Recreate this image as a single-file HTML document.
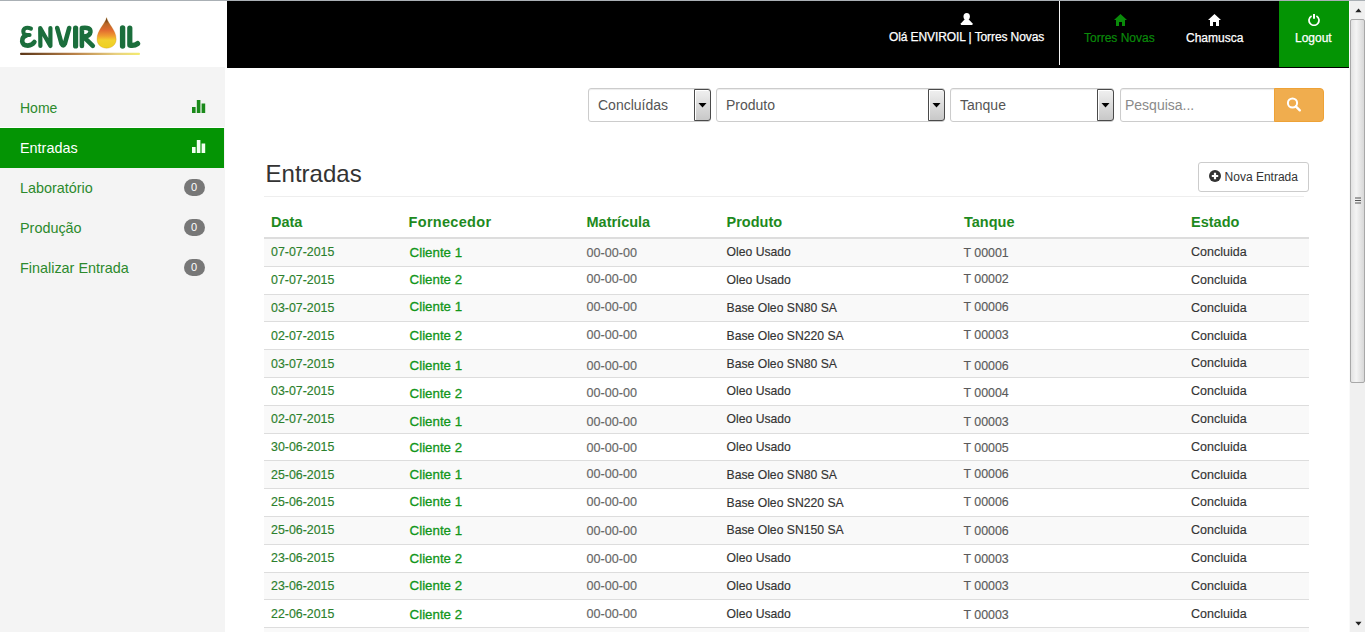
<!DOCTYPE html>
<html><head><meta charset="utf-8"><title>Entradas</title>
<style>
html,body{margin:0;padding:0;width:1365px;height:632px;overflow:hidden;background:#fff;font-family:"Liberation Sans",sans-serif;}
.r{position:absolute;}
.t{position:absolute;line-height:1;white-space:nowrap;}
.tb .t,.s{-webkit-text-stroke:0.15px currentColor;}
</style></head><body>
<div class="r" style="left:0px;top:0px;width:1365px;height:1px;background:#aab0b5"></div>
<div class="r" style="left:0px;top:1px;width:225px;height:66px;background:#fff"></div>
<div class="r" style="left:0px;top:67px;width:225px;height:565px;background:#f4f4f4"></div>
<svg class="r" style="left:0px;top:0px" width="225" height="67" viewBox="0 0 225 67">
<defs>
<linearGradient id="ul" x1="0" x2="1" y1="0" y2="0"><stop offset="0" stop-color="#5a3618"/><stop offset="0.45" stop-color="#b88048"/><stop offset="0.8" stop-color="#e8d080"/><stop offset="1" stop-color="#f4ec70"/></linearGradient>
<linearGradient id="drop" x1="0" x2="0" y1="0" y2="1"><stop offset="0" stop-color="#40240c"/><stop offset="0.2" stop-color="#b86828"/><stop offset="0.42" stop-color="#e26c30"/><stop offset="0.6" stop-color="#f09c30"/><stop offset="0.74" stop-color="#f2d22e"/><stop offset="1" stop-color="#eed020"/></linearGradient>
</defs>
<g fill="none" stroke="#1b6e3c" stroke-linecap="round" stroke-linejoin="round">
<path d="M31 28.6 Q27.2 26.8 24.8 28.4 Q22.6 30.2 23.6 33 Q24.4 35 27.4 35 L29.6 35" stroke-width="4"/>
<path d="M26.4 35.6 Q22 36.6 22.2 41.4 Q22.8 45.6 27.8 45.6 Q32.2 45.4 34.4 42" stroke-width="4.6"/>
<path d="M40.4 46 L40.2 28 L50.4 46 L50.4 28" stroke-width="4.2"/>
<path d="M57.2 28 L61.6 43.8 Q63.2 47 64.8 43.8 L69.2 28" stroke-width="4.6"/>
<path d="M75.6 28 L75.6 46" stroke-width="5.2"/>
<path d="M81.9 46 L81.9 28 Q90.8 26.8 90.4 32 Q89.9 36.4 83.5 36.6 L92.8 45.8" stroke-width="4.6"/>
<path d="M122.6 28 L122.6 46" stroke-width="5.4"/>
<path d="M129.8 28 L129.8 45.2 Q134.5 46 137.6 43.6" stroke-width="5.2"/>
</g>
<path d="M106.6 17.6 C108 24 116.2 30 116.2 39.2 C116.2 44.6 111.8 48.2 106.6 48.2 C101.4 48.2 97 44.6 97 39.2 C97 30 105.2 24 106.6 17.6 Z" fill="url(#drop)" stroke="#c8801c" stroke-opacity="0.5" stroke-width="0.5"/>
<rect x="20" y="52.8" width="120" height="2.3" rx="1" fill="url(#ul)"/>
</svg>
<div class="t " style="left:20px;top:100.95px;font-size:14px;color:#2c8a2c;font-weight:normal;">Home</div>
<div class="r" style="left:0px;top:127px;width:225px;height:1px;background:#fff"></div>
<div class="r" style="left:0px;top:128px;width:224px;height:40px;background:#049404"></div>
<div class="t " style="left:20px;top:140.81px;font-size:14.4px;color:#fff;font-weight:normal;">Entradas</div>
<div class="t " style="left:20px;top:180.81px;font-size:14.4px;color:#2c8a2c;font-weight:normal;">Laborat&oacute;rio</div>
<div class="t " style="left:20px;top:220.81px;font-size:14.4px;color:#2c8a2c;font-weight:normal;">Produ&ccedil;&atilde;o</div>
<div class="t " style="left:20px;top:260.81px;font-size:14.4px;color:#2c8a2c;font-weight:normal;">Finalizar Entrada</div>
<svg class="r" style="left:192px;top:100px" width="14" height="13" viewBox="0 0 14 13"><rect x="0" y="7" width="3.6" height="6" fill="#1a8a1a"/><rect x="4.8" y="0" width="3.6" height="13" fill="#1a8a1a"/><rect x="9.6" y="3.5" width="3.6" height="9.5" fill="#1a8a1a"/></svg>
<svg class="r" style="left:192px;top:140px" width="14" height="13" viewBox="0 0 14 13"><rect x="0" y="7" width="3.6" height="6" fill="#f0fff0"/><rect x="4.8" y="0" width="3.6" height="13" fill="#f0fff0"/><rect x="9.6" y="3.5" width="3.6" height="9.5" fill="#f0fff0"/></svg>
<div class="r" style="left:184px;top:179px;width:21px;height:17px;background:#777;border-radius:9px"></div>
<div class="t " style="left:191px;top:182.19px;font-size:11px;color:#fff;font-weight:normal;">0</div>
<div class="r" style="left:184px;top:219px;width:21px;height:17px;background:#777;border-radius:9px"></div>
<div class="t " style="left:191px;top:222.19px;font-size:11px;color:#fff;font-weight:normal;">0</div>
<div class="r" style="left:184px;top:259px;width:21px;height:17px;background:#777;border-radius:9px"></div>
<div class="t " style="left:191px;top:262.19px;font-size:11px;color:#fff;font-weight:normal;">0</div>
<div class="r" style="left:227px;top:1px;width:1122px;height:67px;background:#000"></div>
<div class="r" style="left:1059px;top:1px;width:1px;height:64px;background:#f4f4f4"></div>
<div class="r" style="left:1279px;top:1px;width:70px;height:66px;background:#049404"></div>
<svg class="r" style="left:960px;top:12px" width="14" height="14" viewBox="0 0 14 14"><ellipse cx="6.7" cy="4.6" rx="3.2" ry="3.7" fill="#fff"/><path d="M4.6 7.6 L8.8 7.6 L12.4 11.2 Q13.2 13.1 11.8 13.1 L1.6 13.1 Q0.2 13.1 1 11.2 Z" fill="#fff"/></svg>
<div class="t " style="left:889px;top:30.84px;font-size:12px;color:#fff;font-weight:normal;letter-spacing:-0.1px;-webkit-text-stroke:0.25px #fff">Ol&aacute; ENVIROIL | Torres Novas</div>
<svg class="r" style="left:1114.3px;top:14px" width="13" height="12" viewBox="0 0 13 12"><path d="M6.5 0 L13 6 L11 6 L11 12 L8 12 L8 8 L5 8 L5 12 L2 12 L2 6 L0 6 Z" fill="#0a8a0a"/></svg>
<div class="t " style="left:1084px;top:31.84px;font-size:12px;color:#0a8a0a;font-weight:normal;-webkit-text-stroke:0.2px #0a8a0a">Torres Novas</div>
<svg class="r" style="left:1208.3px;top:14px" width="13" height="12" viewBox="0 0 13 12"><path d="M6.5 0 L13 6 L11 6 L11 12 L8 12 L8 8 L5 8 L5 12 L2 12 L2 6 L0 6 Z" fill="#fff"/></svg>
<div class="t " style="left:1186px;top:31.84px;font-size:12px;color:#fff;font-weight:normal;-webkit-text-stroke:0.25px #fff">Chamusca</div>
<svg class="r" style="left:1308px;top:14px" width="12" height="12" viewBox="0 0 12 12"><path d="M3.6 1.9 A5 5 0 1 0 8.4 1.9" fill="none" stroke="#fff" stroke-width="1.7"/><path d="M6 0.1 L6 4.8" stroke="#fff" stroke-width="2"/></svg>
<div class="t " style="left:1295px;top:31.84px;font-size:12px;color:#fff;font-weight:normal;-webkit-text-stroke:0.25px #fff">Logout</div>
<div class="r" style="left:1349px;top:1px;width:16px;height:631px;background:#f0f0f0;border-left:1px solid #fafafa;box-sizing:border-box"></div>
<div class="r" style="left:1350px;top:19px;width:15px;height:364px;background:linear-gradient(90deg,#e2e2e2,#f4f4f4 40%,#d8d8d8);border:1px solid #a8a8a8;border-radius:2px;box-sizing:border-box"></div>
<svg class="r" style="left:1355px;top:7.5px" width="7" height="5"><path d="M0.3 4.3 L3.6 0.6 L6.5 4.3 Z" fill="#222"/></svg>
<svg class="r" style="left:1355px;top:621px" width="7" height="5"><path d="M0.3 0.7 L3.6 4.4 L6.5 0.7 Z" fill="#222"/></svg>
<svg class="r" style="left:1354.5px;top:196.5px" width="7" height="8"><path d="M0 1 H6 M0 3.5 H6 M0 6 H6" stroke="#555" stroke-width="1.1"/></svg>
<div class="r" style="left:588px;top:88px;width:123px;height:34px;background:#fff;border:1px solid #ccc;border-radius:3px;box-sizing:border-box;box-shadow:inset 0 1px 1px rgba(0,0,0,.075)"></div>
<div class="t " style="left:598px;top:97.85px;font-size:14px;color:#555;font-weight:normal;">Conclu&iacute;das</div>
<div class="r" style="left:694px;top:89px;width:17px;height:32px;background:linear-gradient(#f0f0f0,#c8c8c8);border:1px solid #4a4a4a;border-radius:0 3px 3px 0;box-sizing:border-box;box-shadow:inset 1px 1px 0 #fff"></div>
<svg class="r" style="left:698px;top:103px" width="9" height="5"><path d="M0.5 0 L8.5 0 L4.5 4.5 Z" fill="#000"/></svg>
<div class="r" style="left:716px;top:88px;width:229px;height:34px;background:#fff;border:1px solid #ccc;border-radius:3px;box-sizing:border-box;box-shadow:inset 0 1px 1px rgba(0,0,0,.075)"></div>
<div class="t " style="left:726px;top:97.85px;font-size:14px;color:#555;font-weight:normal;">Produto</div>
<div class="r" style="left:928px;top:89px;width:17px;height:32px;background:linear-gradient(#f0f0f0,#c8c8c8);border:1px solid #4a4a4a;border-radius:0 3px 3px 0;box-sizing:border-box;box-shadow:inset 1px 1px 0 #fff"></div>
<svg class="r" style="left:932px;top:103px" width="9" height="5"><path d="M0.5 0 L8.5 0 L4.5 4.5 Z" fill="#000"/></svg>
<div class="r" style="left:950px;top:88px;width:164px;height:34px;background:#fff;border:1px solid #ccc;border-radius:3px;box-sizing:border-box;box-shadow:inset 0 1px 1px rgba(0,0,0,.075)"></div>
<div class="t " style="left:960px;top:97.85px;font-size:14px;color:#555;font-weight:normal;">Tanque</div>
<div class="r" style="left:1097px;top:89px;width:17px;height:32px;background:linear-gradient(#f0f0f0,#c8c8c8);border:1px solid #4a4a4a;border-radius:0 3px 3px 0;box-sizing:border-box;box-shadow:inset 1px 1px 0 #fff"></div>
<svg class="r" style="left:1101px;top:103px" width="9" height="5"><path d="M0.5 0 L8.5 0 L4.5 4.5 Z" fill="#000"/></svg>
<div class="r" style="left:1120px;top:88px;width:155px;height:34px;background:#fff;border:1px solid #ccc;border-radius:3px 0 0 3px;box-sizing:border-box;box-shadow:inset 0 1px 1px rgba(0,0,0,.075)"></div>
<div class="t " style="left:1125px;top:97.85px;font-size:14px;color:#8a8a8a;font-weight:normal;">Pesquisa...</div>
<div class="r" style="left:1274px;top:88px;width:50px;height:34px;background:#f0ad4e;border:1px solid #eea236;border-radius:0 4px 4px 0;box-sizing:border-box"></div>
<svg class="r" style="left:1286px;top:96px" width="16" height="16" viewBox="0 0 16 16"><circle cx="6.5" cy="7" r="4.6" fill="none" stroke="#fff" stroke-width="2"/><path d="M9.8 10.3 L13.8 14.3" stroke="#fff" stroke-width="2.4" stroke-linecap="round"/></svg>
<div class="t " style="left:265.6px;top:162.28px;font-size:24px;color:#333;font-weight:normal;">Entradas</div>
<div class="r" style="left:264px;top:196px;width:1040px;height:1px;background:#eee"></div>
<div class="r" style="left:1198px;top:162px;width:111px;height:30px;background:#fff;border:1px solid #ccc;border-radius:3px;box-sizing:border-box"></div>
<svg class="r" style="left:1209px;top:170px" width="12" height="12" viewBox="0 0 12 12"><circle cx="6" cy="6" r="6" fill="#333"/><path d="M6 2.8 V9.2 M2.8 6 H9.2" stroke="#fff" stroke-width="2.2"/></svg>
<div class="t " style="left:1224.6px;top:170.54px;font-size:12px;color:#333;font-weight:normal;">Nova Entrada</div>
<div class="t " style="left:271px;top:215.03px;font-size:14.5px;color:#1e8a1e;font-weight:bold;">Data</div>
<div class="t " style="left:408.6px;top:215.03px;font-size:14.5px;color:#1e8a1e;font-weight:bold;letter-spacing:0.3px">Fornecedor</div>
<div class="t " style="left:586.5px;top:215.03px;font-size:14.5px;color:#1e8a1e;font-weight:bold;">Matr&iacute;cula</div>
<div class="t " style="left:726.5px;top:215.03px;font-size:14.5px;color:#1e8a1e;font-weight:bold;">Produto</div>
<div class="t " style="left:964px;top:215.03px;font-size:14.5px;color:#1e8a1e;font-weight:bold;">Tanque</div>
<div class="t " style="left:1191px;top:215.03px;font-size:14.5px;color:#1e8a1e;font-weight:bold;">Estado</div>
<div class="r" style="left:264px;top:237px;width:1045px;height:2px;background:#ddd"></div>
<div class="r" style="left:264px;top:628px;width:1045px;height:4px;background:#f9f9f9"></div>
<div class="r" style="left:264px;top:239px;width:1045px;height:27px;background:#f9f9f9"></div>
<div class="r" style="left:264px;top:266px;width:1045px;height:1px;background:#ddd"></div>
<div class="t s" style="left:271px;top:245.60px;font-size:12.4px;color:#2c802c;font-weight:normal;">07-07-2015</div>
<div class="t " style="left:409.6px;top:246.34px;font-size:13.3px;color:#12961a;font-weight:normal;-webkit-text-stroke:0.3px #12961a">Cliente 1</div>
<div class="t s" style="left:586.5px;top:246.93px;font-size:12.6px;color:#666;font-weight:normal;">00-00-00</div>
<div class="t s" style="left:726.5px;top:245.77px;font-size:12.2px;color:#333;font-weight:normal;">Oleo Usado</div>
<div class="t s" style="left:963.5px;top:247.10px;font-size:12.4px;color:#5a5a5a;font-weight:normal;">T 00001</div>
<div class="t s" style="left:1191px;top:245.52px;font-size:12.5px;color:#333;font-weight:normal;">Concluida</div>
<div class="r" style="left:264px;top:294px;width:1045px;height:1px;background:#ddd"></div>
<div class="t s" style="left:271px;top:273.80px;font-size:12.4px;color:#2c802c;font-weight:normal;">07-07-2015</div>
<div class="t " style="left:409.6px;top:272.54px;font-size:13.3px;color:#12961a;font-weight:normal;-webkit-text-stroke:0.3px #12961a">Cliente 2</div>
<div class="t s" style="left:586.5px;top:273.13px;font-size:12.6px;color:#666;font-weight:normal;">00-00-00</div>
<div class="t s" style="left:726.5px;top:273.97px;font-size:12.2px;color:#333;font-weight:normal;">Oleo Usado</div>
<div class="t s" style="left:963.5px;top:273.30px;font-size:12.4px;color:#5a5a5a;font-weight:normal;">T 00002</div>
<div class="t s" style="left:1191px;top:273.72px;font-size:12.5px;color:#333;font-weight:normal;">Concluida</div>
<div class="r" style="left:264px;top:295px;width:1045px;height:26px;background:#f9f9f9"></div>
<div class="r" style="left:264px;top:321px;width:1045px;height:1px;background:#ddd"></div>
<div class="t s" style="left:271px;top:301.70px;font-size:12.4px;color:#2c802c;font-weight:normal;">03-07-2015</div>
<div class="t " style="left:409.6px;top:300.24px;font-size:13.3px;color:#12961a;font-weight:normal;-webkit-text-stroke:0.3px #12961a">Cliente 1</div>
<div class="t s" style="left:586.5px;top:300.83px;font-size:12.6px;color:#666;font-weight:normal;">00-00-00</div>
<div class="t s" style="left:726.5px;top:301.87px;font-size:12.2px;color:#333;font-weight:normal;">Base Oleo SN80 SA</div>
<div class="t s" style="left:963.5px;top:301.00px;font-size:12.4px;color:#5a5a5a;font-weight:normal;">T 00006</div>
<div class="t s" style="left:1191px;top:301.62px;font-size:12.5px;color:#333;font-weight:normal;">Concluida</div>
<div class="r" style="left:264px;top:349px;width:1045px;height:1px;background:#ddd"></div>
<div class="t s" style="left:271px;top:329.80px;font-size:12.4px;color:#2c802c;font-weight:normal;">02-07-2015</div>
<div class="t " style="left:409.6px;top:328.64px;font-size:13.3px;color:#12961a;font-weight:normal;-webkit-text-stroke:0.3px #12961a">Cliente 2</div>
<div class="t s" style="left:586.5px;top:329.23px;font-size:12.6px;color:#666;font-weight:normal;">00-00-00</div>
<div class="t s" style="left:726.5px;top:329.97px;font-size:12.2px;color:#333;font-weight:normal;">Base Oleo SN220 SA</div>
<div class="t s" style="left:963.5px;top:329.40px;font-size:12.4px;color:#5a5a5a;font-weight:normal;">T 00003</div>
<div class="t s" style="left:1191px;top:329.72px;font-size:12.5px;color:#333;font-weight:normal;">Concluida</div>
<div class="r" style="left:264px;top:350px;width:1045px;height:27px;background:#f9f9f9"></div>
<div class="r" style="left:264px;top:377px;width:1045px;height:1px;background:#ddd"></div>
<div class="t s" style="left:271px;top:357.50px;font-size:12.4px;color:#2c802c;font-weight:normal;">03-07-2015</div>
<div class="t " style="left:409.6px;top:359.44px;font-size:13.3px;color:#12961a;font-weight:normal;-webkit-text-stroke:0.3px #12961a">Cliente 1</div>
<div class="t s" style="left:586.5px;top:360.03px;font-size:12.6px;color:#666;font-weight:normal;">00-00-00</div>
<div class="t s" style="left:726.5px;top:357.67px;font-size:12.2px;color:#333;font-weight:normal;">Base Oleo SN80 SA</div>
<div class="t s" style="left:963.5px;top:360.20px;font-size:12.4px;color:#5a5a5a;font-weight:normal;">T 00006</div>
<div class="t s" style="left:1191px;top:357.42px;font-size:12.5px;color:#333;font-weight:normal;">Concluida</div>
<div class="r" style="left:264px;top:405px;width:1045px;height:1px;background:#ddd"></div>
<div class="t s" style="left:271px;top:385.20px;font-size:12.4px;color:#2c802c;font-weight:normal;">03-07-2015</div>
<div class="t " style="left:409.6px;top:386.64px;font-size:13.3px;color:#12961a;font-weight:normal;-webkit-text-stroke:0.3px #12961a">Cliente 2</div>
<div class="t s" style="left:586.5px;top:387.23px;font-size:12.6px;color:#666;font-weight:normal;">00-00-00</div>
<div class="t s" style="left:726.5px;top:385.37px;font-size:12.2px;color:#333;font-weight:normal;">Oleo Usado</div>
<div class="t s" style="left:963.5px;top:387.40px;font-size:12.4px;color:#5a5a5a;font-weight:normal;">T 00004</div>
<div class="t s" style="left:1191px;top:385.12px;font-size:12.5px;color:#333;font-weight:normal;">Concluida</div>
<div class="r" style="left:264px;top:406px;width:1045px;height:27px;background:#f9f9f9"></div>
<div class="r" style="left:264px;top:433px;width:1045px;height:1px;background:#ddd"></div>
<div class="t s" style="left:271px;top:412.90px;font-size:12.4px;color:#2c802c;font-weight:normal;">02-07-2015</div>
<div class="t " style="left:409.6px;top:415.44px;font-size:13.3px;color:#12961a;font-weight:normal;-webkit-text-stroke:0.3px #12961a">Cliente 1</div>
<div class="t s" style="left:586.5px;top:416.03px;font-size:12.6px;color:#666;font-weight:normal;">00-00-00</div>
<div class="t s" style="left:726.5px;top:413.07px;font-size:12.2px;color:#333;font-weight:normal;">Oleo Usado</div>
<div class="t s" style="left:963.5px;top:416.20px;font-size:12.4px;color:#5a5a5a;font-weight:normal;">T 00003</div>
<div class="t s" style="left:1191px;top:412.82px;font-size:12.5px;color:#333;font-weight:normal;">Concluida</div>
<div class="r" style="left:264px;top:460px;width:1045px;height:1px;background:#ddd"></div>
<div class="t s" style="left:271px;top:441.00px;font-size:12.4px;color:#2c802c;font-weight:normal;">30-06-2015</div>
<div class="t " style="left:409.6px;top:441.34px;font-size:13.3px;color:#12961a;font-weight:normal;-webkit-text-stroke:0.3px #12961a">Cliente 2</div>
<div class="t s" style="left:586.5px;top:441.93px;font-size:12.6px;color:#666;font-weight:normal;">00-00-00</div>
<div class="t s" style="left:726.5px;top:441.17px;font-size:12.2px;color:#333;font-weight:normal;">Oleo Usado</div>
<div class="t s" style="left:963.5px;top:442.10px;font-size:12.4px;color:#5a5a5a;font-weight:normal;">T 00005</div>
<div class="t s" style="left:1191px;top:440.92px;font-size:12.5px;color:#333;font-weight:normal;">Concluida</div>
<div class="r" style="left:264px;top:461px;width:1045px;height:27px;background:#f9f9f9"></div>
<div class="r" style="left:264px;top:488px;width:1045px;height:1px;background:#ddd"></div>
<div class="t s" style="left:271px;top:468.90px;font-size:12.4px;color:#2c802c;font-weight:normal;">25-06-2015</div>
<div class="t " style="left:409.6px;top:467.54px;font-size:13.3px;color:#12961a;font-weight:normal;-webkit-text-stroke:0.3px #12961a">Cliente 1</div>
<div class="t s" style="left:586.5px;top:468.13px;font-size:12.6px;color:#666;font-weight:normal;">00-00-00</div>
<div class="t s" style="left:726.5px;top:469.07px;font-size:12.2px;color:#333;font-weight:normal;">Base Oleo SN80 SA</div>
<div class="t s" style="left:963.5px;top:468.30px;font-size:12.4px;color:#5a5a5a;font-weight:normal;">T 00006</div>
<div class="t s" style="left:1191px;top:468.82px;font-size:12.5px;color:#333;font-weight:normal;">Concluida</div>
<div class="r" style="left:264px;top:516px;width:1045px;height:1px;background:#ddd"></div>
<div class="t s" style="left:271px;top:496.40px;font-size:12.4px;color:#2c802c;font-weight:normal;">25-06-2015</div>
<div class="t " style="left:409.6px;top:494.94px;font-size:13.3px;color:#12961a;font-weight:normal;-webkit-text-stroke:0.3px #12961a">Cliente 1</div>
<div class="t s" style="left:586.5px;top:495.53px;font-size:12.6px;color:#666;font-weight:normal;">00-00-00</div>
<div class="t s" style="left:726.5px;top:496.57px;font-size:12.2px;color:#333;font-weight:normal;">Base Oleo SN220 SA</div>
<div class="t s" style="left:963.5px;top:495.70px;font-size:12.4px;color:#5a5a5a;font-weight:normal;">T 00006</div>
<div class="t s" style="left:1191px;top:496.32px;font-size:12.5px;color:#333;font-weight:normal;">Concluida</div>
<div class="r" style="left:264px;top:517px;width:1045px;height:27px;background:#f9f9f9"></div>
<div class="r" style="left:264px;top:544px;width:1045px;height:1px;background:#ddd"></div>
<div class="t s" style="left:271px;top:524.00px;font-size:12.4px;color:#2c802c;font-weight:normal;">25-06-2015</div>
<div class="t " style="left:409.6px;top:524.34px;font-size:13.3px;color:#12961a;font-weight:normal;-webkit-text-stroke:0.3px #12961a">Cliente 1</div>
<div class="t s" style="left:586.5px;top:524.93px;font-size:12.6px;color:#666;font-weight:normal;">00-00-00</div>
<div class="t s" style="left:726.5px;top:524.17px;font-size:12.2px;color:#333;font-weight:normal;">Base Oleo SN150 SA</div>
<div class="t s" style="left:963.5px;top:525.10px;font-size:12.4px;color:#5a5a5a;font-weight:normal;">T 00006</div>
<div class="t s" style="left:1191px;top:523.92px;font-size:12.5px;color:#333;font-weight:normal;">Concluida</div>
<div class="r" style="left:264px;top:572px;width:1045px;height:1px;background:#ddd"></div>
<div class="t s" style="left:271px;top:552.10px;font-size:12.4px;color:#2c802c;font-weight:normal;">23-06-2015</div>
<div class="t " style="left:409.6px;top:552.04px;font-size:13.3px;color:#12961a;font-weight:normal;-webkit-text-stroke:0.3px #12961a">Cliente 2</div>
<div class="t s" style="left:586.5px;top:552.63px;font-size:12.6px;color:#666;font-weight:normal;">00-00-00</div>
<div class="t s" style="left:726.5px;top:552.27px;font-size:12.2px;color:#333;font-weight:normal;">Oleo Usado</div>
<div class="t s" style="left:963.5px;top:552.80px;font-size:12.4px;color:#5a5a5a;font-weight:normal;">T 00003</div>
<div class="t s" style="left:1191px;top:552.02px;font-size:12.5px;color:#333;font-weight:normal;">Concluida</div>
<div class="r" style="left:264px;top:573px;width:1045px;height:26px;background:#f9f9f9"></div>
<div class="r" style="left:264px;top:599px;width:1045px;height:1px;background:#ddd"></div>
<div class="t s" style="left:271px;top:579.80px;font-size:12.4px;color:#2c802c;font-weight:normal;">23-06-2015</div>
<div class="t " style="left:409.6px;top:579.34px;font-size:13.3px;color:#12961a;font-weight:normal;-webkit-text-stroke:0.3px #12961a">Cliente 2</div>
<div class="t s" style="left:586.5px;top:579.93px;font-size:12.6px;color:#666;font-weight:normal;">00-00-00</div>
<div class="t s" style="left:726.5px;top:579.97px;font-size:12.2px;color:#333;font-weight:normal;">Oleo Usado</div>
<div class="t s" style="left:963.5px;top:580.10px;font-size:12.4px;color:#5a5a5a;font-weight:normal;">T 00003</div>
<div class="t s" style="left:1191px;top:579.72px;font-size:12.5px;color:#333;font-weight:normal;">Concluida</div>
<div class="r" style="left:264px;top:627px;width:1045px;height:1px;background:#ddd"></div>
<div class="t s" style="left:271px;top:607.80px;font-size:12.4px;color:#2c802c;font-weight:normal;">22-06-2015</div>
<div class="t " style="left:409.6px;top:607.84px;font-size:13.3px;color:#12961a;font-weight:normal;-webkit-text-stroke:0.3px #12961a">Cliente 2</div>
<div class="t s" style="left:586.5px;top:608.43px;font-size:12.6px;color:#666;font-weight:normal;">00-00-00</div>
<div class="t s" style="left:726.5px;top:607.97px;font-size:12.2px;color:#333;font-weight:normal;">Oleo Usado</div>
<div class="t s" style="left:963.5px;top:608.60px;font-size:12.4px;color:#5a5a5a;font-weight:normal;">T 00003</div>
<div class="t s" style="left:1191px;top:607.72px;font-size:12.5px;color:#333;font-weight:normal;">Concluida</div>
</body></html>
